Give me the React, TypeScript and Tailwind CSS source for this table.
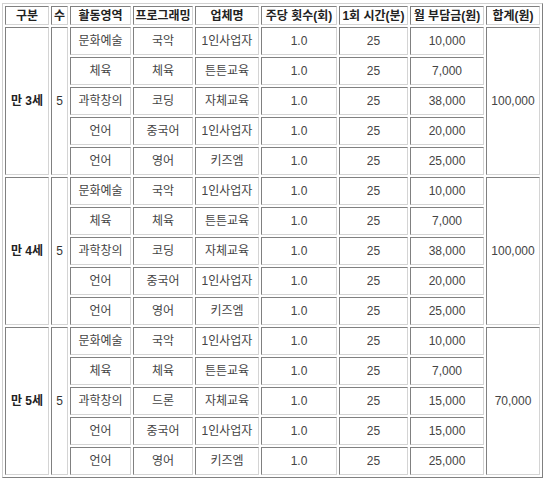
type Row = [string, string, string, string, string, string];

interface Group {
  age: string;
  count: string;
  total: string;
  rows: Row[];
}

const GROUPS: Group[] = [
  {
    age: "만 3세",
    count: "5",
    total: "100,000",
    rows: [
      ["문화예술", "국악", "1인사업자", "1.0", "25", "10,000"],
      ["체육", "체육", "튼튼교육", "1.0", "25", "7,000"],
      ["과학창의", "코딩", "자체교육", "1.0", "25", "38,000"],
      ["언어", "중국어", "1인사업자", "1.0", "25", "20,000"],
      ["언어", "영어", "키즈엠", "1.0", "25", "25,000"],
    ],
  },
  {
    age: "만 4세",
    count: "5",
    total: "100,000",
    rows: [
      ["문화예술", "국악", "1인사업자", "1.0", "25", "10,000"],
      ["체육", "체육", "튼튼교육", "1.0", "25", "7,000"],
      ["과학창의", "코딩", "자체교육", "1.0", "25", "38,000"],
      ["언어", "중국어", "1인사업자", "1.0", "25", "20,000"],
      ["언어", "영어", "키즈엠", "1.0", "25", "25,000"],
    ],
  },
  {
    age: "만 5세",
    count: "5",
    total: "70,000",
    rows: [
      ["문화예술", "국악", "1인사업자", "1.0", "25", "10,000"],
      ["체육", "체육", "튼튼교육", "1.0", "25", "7,000"],
      ["과학창의", "드론", "자체교육", "1.0", "25", "15,000"],
      ["언어", "중국어", "1인사업자", "1.0", "25", "15,000"],
      ["언어", "영어", "키즈엠", "1.0", "25", "25,000"],
    ],
  },
];

// inset cell border like an old border="1" table
const cell =
  "border border-t-[#808080] border-l-[#808080] border-r-[#d4d4d4] border-b-[#d4d4d4] p-0 text-center align-middle";

const HEADERS: [string, string][] = [
  ["구분", "w-[44px]"],
  ["수", "w-[17px]"],
  ["활동영역", "w-[61px]"],
  ["프로그래밍", "w-[60px]"],
  ["업체명", "w-[64px]"],
  ["주당 횟수(회)", "w-[76px]"],
  ["1회 시간(분)", "w-[69px]"],
  ["월 부담금(원)", "w-[74px]"],
  ["합계(원)", "w-[54px]"],
];

export default function App() {
  return (
    <div className="bg-white w-[543px] h-[478px] pt-[3px] pl-[2px] font-['Liberation_Sans','Noto_Sans_CJK_KR',sans-serif] text-[12px] leading-[14px]">
      <table className="w-[541px] table-fixed border-separate border-spacing-[2px] border border-t-[#d0d0d0] border-l-[#d0d0d0] border-r-[#808080] border-b-[#808080]">
        <thead>
          <tr className="h-[19px]">
            {HEADERS.map(([label, w]) => (
              <th key={label} className={`${cell} ${w} font-bold text-[#222] whitespace-nowrap`}>
                {label}
              </th>
            ))}
          </tr>
        </thead>
        <tbody>
          {GROUPS.map((g) =>
            g.rows.map((r, i) => (
              <tr key={g.age + i} className="h-[28px]">
                {i === 0 && (
                  <>
                    <td rowSpan={5} className={`${cell} font-bold text-[#222]`}>
                      {g.age}
                    </td>
                    <td rowSpan={5} className={`${cell} text-[#333]`}>
                      {g.count}
                    </td>
                  </>
                )}
                {r.map((v, j) => (
                  <td key={j} className={`${cell} text-[#444] whitespace-nowrap`}>
                    {v}
                  </td>
                ))}
                {i === 0 && (
                  <td rowSpan={5} className={`${cell} text-[#444]`}>
                    {g.total}
                  </td>
                )}
              </tr>
            ))
          )}
        </tbody>
      </table>
    </div>
  );
}
